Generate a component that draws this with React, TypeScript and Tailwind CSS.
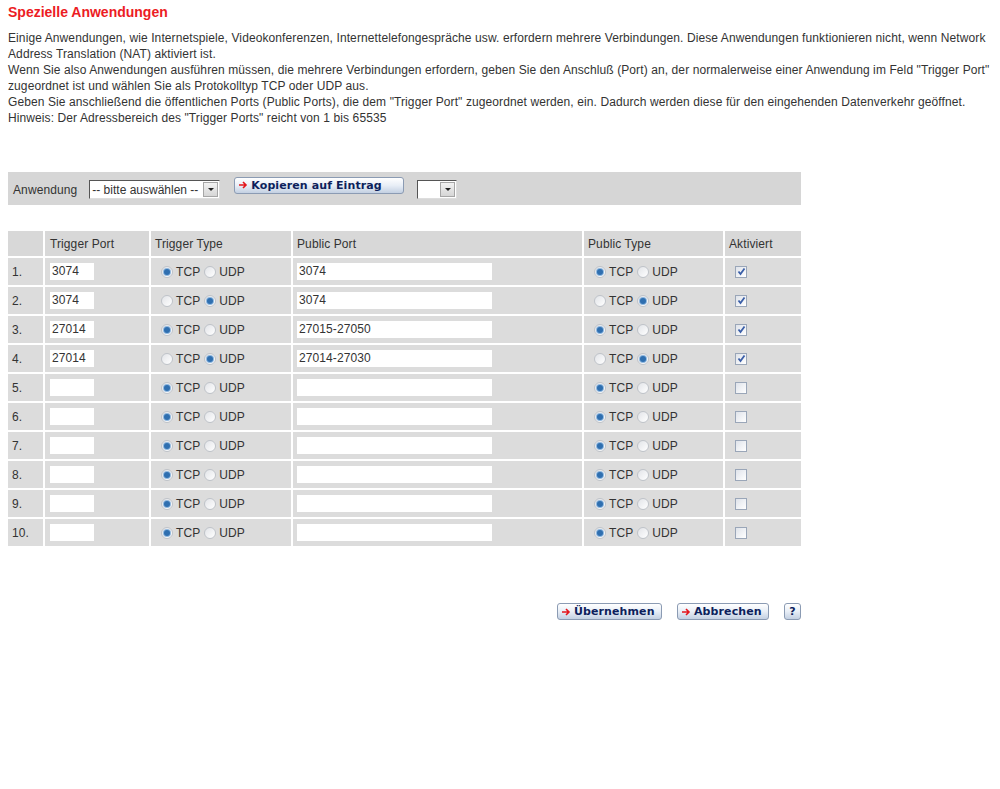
import React from 'react';

type Row = {
  trigger: string;
  triggerType: 'TCP' | 'UDP';
  pub: string;
  pubType: 'TCP' | 'UDP';
  active: boolean;
};

const rows: Row[] = [
  { trigger: '3074', triggerType: 'TCP', pub: '3074', pubType: 'TCP', active: true },
  { trigger: '3074', triggerType: 'UDP', pub: '3074', pubType: 'UDP', active: true },
  { trigger: '27014', triggerType: 'TCP', pub: '27015-27050', pubType: 'TCP', active: true },
  { trigger: '27014', triggerType: 'UDP', pub: '27014-27030', pubType: 'UDP', active: true },
  { trigger: '', triggerType: 'TCP', pub: '', pubType: 'TCP', active: false },
  { trigger: '', triggerType: 'TCP', pub: '', pubType: 'TCP', active: false },
  { trigger: '', triggerType: 'TCP', pub: '', pubType: 'TCP', active: false },
  { trigger: '', triggerType: 'TCP', pub: '', pubType: 'TCP', active: false },
  { trigger: '', triggerType: 'TCP', pub: '', pubType: 'TCP', active: false },
  { trigger: '', triggerType: 'TCP', pub: '', pubType: 'TCP', active: false },
];

const Radio = ({ checked }: { checked: boolean }) => (
  <span className="inline-flex h-[12px] w-[12px] items-center justify-center rounded-full border border-[#bfc3c9] bg-gradient-to-br from-[#e2e4e8] to-white">
    {checked && <span className="h-[6px] w-[6px] rounded-full bg-[#2f6fb0] shadow-[0_0_0_1px_#8fb7de]" />}
  </span>
);

const TypePicker = ({ value }: { value: 'TCP' | 'UDP' }) => (
  <div className="flex items-center gap-[3px] pl-[10px]">
    <Radio checked={value === 'TCP'} />
    <span className="mr-[1px]">TCP</span>
    <Radio checked={value === 'UDP'} />
    <span>UDP</span>
  </div>
);

const Checkbox = ({ checked }: { checked: boolean }) => (
  <span className="flex h-[12px] w-[12px] items-center justify-center border border-[#9aa6b8] bg-gradient-to-br from-[#dfe3ea] to-white">
    {checked && (
      <svg width="9" height="9" viewBox="0 0 9 9">
        <path d="M1.5 4.5 L3.5 7 L7.5 1.5" fill="none" stroke="#3b5fa8" strokeWidth="1.8" />
      </svg>
    )}
  </span>
);

const Arrow = () => (
  <svg width="9" height="8" viewBox="0 0 9 8" className="shrink-0">
    <path d="M0 4 H7 M4 1 L7 4 L4 7" fill="none" stroke="#e3161c" strokeWidth="1.6" />
  </svg>
);

const NavButton = ({ label, className }: { label: string; className: string }) => (
  <div
    className={`flex h-[17px] items-center gap-[3px] rounded-[3px] border border-[#8b9bb3] bg-gradient-to-b from-white via-[#e8eef6] to-[#c3d0e2] pl-[4px] text-[11px] font-bold leading-none text-[#0d1f5c] [font-family:Verdana,'DejaVu_Sans',sans-serif] ${className}`}
  >
    <Arrow />
    <span>{label}</span>
  </div>
);

const Caret = () => (
  <span className="flex h-[15px] w-[15px] items-center justify-center border border-[#a6a6a6] bg-gradient-to-b from-[#f2f2f2] to-[#d6d6d6]">
    <span className="h-0 w-0 border-x-[3px] border-t-[3px] border-x-transparent border-t-[#222]" />
  </span>
);

export default function App() {
  return (
    <div className="min-h-[789px] w-[1000px] bg-white px-2 pt-[3px] text-[12px] leading-[16px] tracking-[0.1px] text-[#333] [font-family:'Liberation_Sans',Arial,sans-serif]">
      <h1 className="text-[14px] font-bold leading-[18px] tracking-normal text-[#ec1c24]">Spezielle Anwendungen</h1>
      <div className="mt-[9px] w-[988px]">
        <p>
          Einige Anwendungen, wie Internetspiele, Videokonferenzen, Internettelefongespräche usw. erfordern mehrere Verbindungen.
          Diese Anwendungen funktionieren nicht, wenn Network Address Translation (NAT) aktiviert ist.
        </p>
        <p>
          Wenn Sie also Anwendungen ausführen müssen, die mehrere Verbindungen erfordern, geben Sie den Anschluß (Port) an, der
          normalerweise einer Anwendung im Feld "Trigger Port" zugeordnet ist und wählen Sie als Protokolltyp TCP oder UDP aus.
        </p>
        <p>
          Geben Sie anschließend die öffentlichen Ports (Public Ports), die dem "Trigger Port" zugeordnet werden, ein. Dadurch
          werden diese für den eingehenden Datenverkehr geöffnet.
        </p>
        <p>Hinweis: Der Adressbereich des "Trigger Ports" reicht von 1 bis 65535</p>
      </div>

      <div className="mt-[46px] flex h-[33px] w-[793px] items-center bg-[#d6d6d6] pl-[5px]">
        <span className="mr-[12px] pt-[2px]">Anwendung</span>
        <div className="mt-[2px] flex h-[19px] w-[131px] items-center justify-between border border-[#555] border-r-[#ddd] border-b-[#ddd] bg-white pl-[2px] pr-[1px]">
          <span className="text-[12px] tracking-normal">-- bitte auswählen --</span>
          <Caret />
        </div>
        <NavButton label="Kopieren auf Eintrag" className="mb-[7px] ml-[14px] w-[170px]" />
        <div className="ml-[13px] mt-[2px] flex h-[19px] w-[40px] items-center justify-end border border-[#555] border-r-[#ddd] border-b-[#ddd] bg-white pr-[1px]">
          <Caret />
        </div>
      </div>

      <table className="mt-[24px] -ml-[2px] w-[797px] table-fixed border-separate border-spacing-[2px] text-left">
        <thead>
          <tr className="h-[25px] bg-[#d8d8d8]">
            <th className="w-[35px] font-normal" />
            <th className="w-[104px] pl-[5px] font-normal">Trigger Port</th>
            <th className="w-[140px] pl-[4px] font-normal">Trigger Type</th>
            <th className="w-[289px] pl-[4px] font-normal">Public Port</th>
            <th className="w-[139px] pl-[4px] font-normal">Public Type</th>
            <th className="w-[76px] pl-[4px] font-normal">Aktiviert</th>
          </tr>
        </thead>
        <tbody>
          {rows.map((r, i) => (
            <tr key={i} className="h-[27px] bg-[#dcdcdc]">
              <td className="pl-[4px]">{i + 1}.</td>
              <td className="pl-[5px]">
                <div className="h-[17px] w-[44px] bg-white pl-[2px] leading-[17px]">{r.trigger}</div>
              </td>
              <td>
                <TypePicker value={r.triggerType} />
              </td>
              <td className="pl-[4px]">
                <div className="h-[17px] w-[195px] bg-white pl-[2px] leading-[17px]">{r.pub}</div>
              </td>
              <td>
                <TypePicker value={r.pubType} />
              </td>
              <td className="pl-[10px]">
                <Checkbox checked={r.active} />
              </td>
            </tr>
          ))}
        </tbody>
      </table>

      <div className="mt-[55px] flex w-[793px] items-center justify-end">
        <NavButton label="Übernehmen" className="w-[105px]" />
        <NavButton label="Abbrechen" className="ml-[15px] w-[92px]" />
        <div className="ml-[15px] flex h-[17px] w-[17px] items-center justify-center rounded-[3px] border border-[#8b9bb3] bg-gradient-to-b from-white via-[#e8eef6] to-[#c3d0e2] text-[11px] font-bold text-[#0d1f5c] [font-family:Verdana,'DejaVu_Sans',sans-serif]">
          ?
        </div>
      </div>
    </div>
  );
}
